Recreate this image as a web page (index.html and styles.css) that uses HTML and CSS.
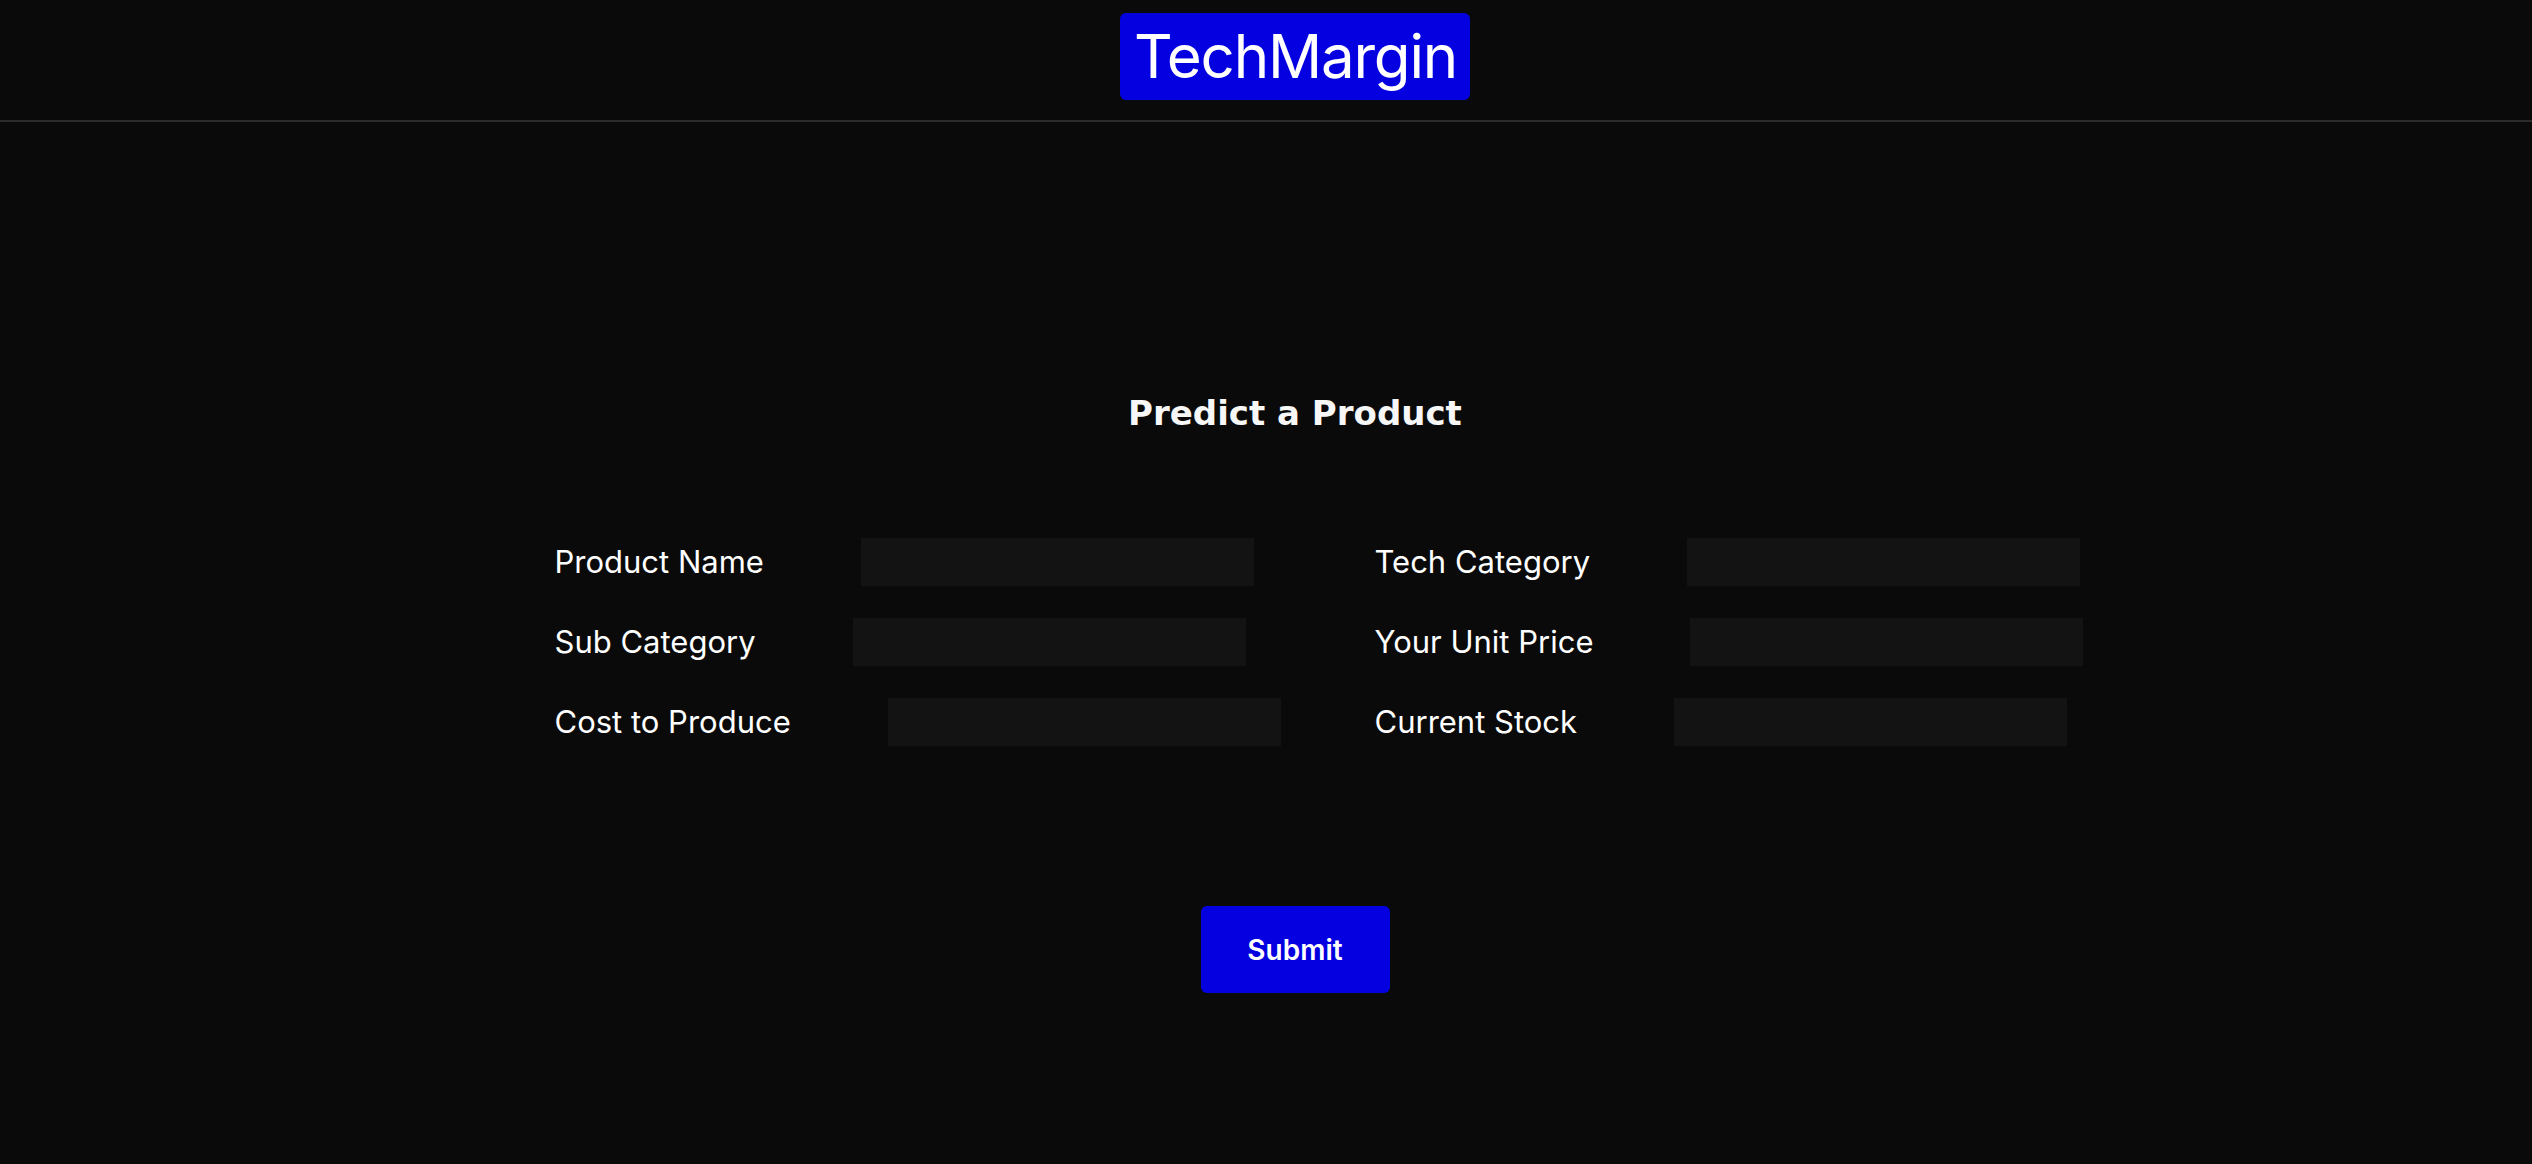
FILE: index.html
```html
<!DOCTYPE html>
<html lang="en">
<head>
<meta charset="utf-8">
<title>TechMargin</title>
<link rel="stylesheet" href="styles.css">
</head>
<body>
<header class="site-header">
  <div class="logo">TechMargin</div>
</header>
<main class="main">
  <h1 class="title">Predict a Product</h1>
  <form class="form">
    <div class="fields">
      <div class="field"><label class="label">Product Name</label><input class="input" type="text"></div>
      <div class="field"><label class="label">Tech Category</label><input class="input" type="text"></div>
      <div class="field"><label class="label">Sub Category</label><input class="input" type="text"></div>
      <div class="field"><label class="label">Your Unit Price</label><input class="input" type="text"></div>
      <div class="field"><label class="label">Cost to Produce</label><input class="input" type="text"></div>
      <div class="field"><label class="label">Current Stock</label><input class="input" type="text"></div>
    </div>
    <button class="submit" type="button">Submit</button>
  </form>
</main>
</body>
</html>
```
FILE: styles.css
```css
* { box-sizing: border-box; }
html, body {
  margin: 0;
  background: #0a0a0a;
  color: #ffffff;
  font-family: Inter, "Liberation Sans", sans-serif;
}
body { min-height: 1164px; }

.site-header {
  display: flex;
  justify-content: center;
  padding: 13px 0 20px 58px;
  border-bottom: 2px solid #2b2b2b;
}
.logo {
  background: #0400e0;
  color: #fff;
  height: 87px;
  line-height: 87px;
  padding: 0 13px 0 14px;
  border-radius: 6px;
  font-size: 60px;
  letter-spacing: -1.2px;
}

.main {
  padding-left: 58px;
  display: flex;
  flex-direction: column;
  align-items: center;
}
.title {
  margin: 271px 0 0;
  font-family: "DejaVu Sans", Inter, sans-serif;
  font-size: 34px;
  line-height: 40px;
  font-weight: 700;
  color: #f7f7f7;
}
.form {
  display: flex;
  flex-direction: column;
  align-items: center;
}
.fields {
  width: 1481px;
  margin-top: 105px;
  display: grid;
  grid-template-columns: 661px 661px;
  column-gap: 159px;
  row-gap: 32px;
}
.field {
  display: flex;
  align-items: center;
  white-space: nowrap;
}
.label {
  font-size: 31px;
  line-height: 46px;
}
.input {
  flex: none;
  width: 393px;
  height: 48px;
  margin-left: 97px;
  background: #131313;
  border: 0;
  outline: 0;
  color: #fff;
}
.submit {
  margin-top: 160px;
  width: 189px;
  height: 87px;
  border: 0;
  border-radius: 6px;
  background: #0400e0;
  color: #fff;
  font-family: Inter, "Liberation Sans", sans-serif;
  font-size: 28px;
  font-weight: 600;
}
```
